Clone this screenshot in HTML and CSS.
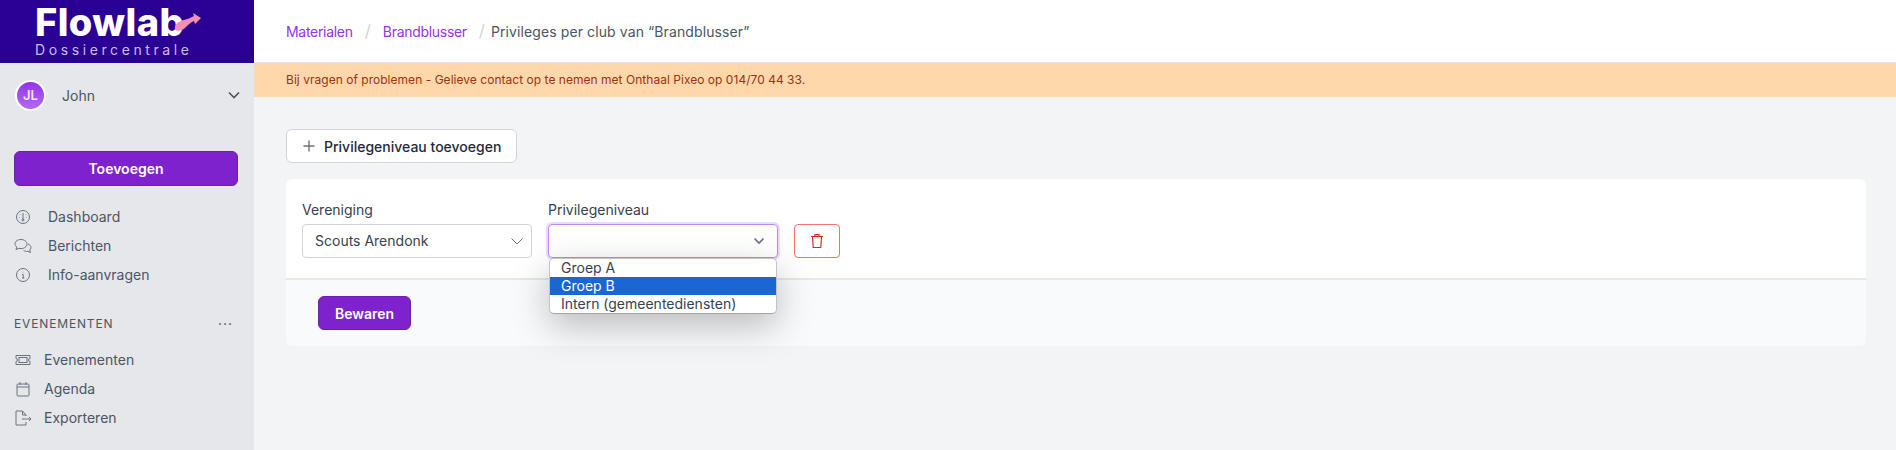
FILE: index.html
```html
<!DOCTYPE html>
<html lang="en">
<head>
    <meta charset="UTF-8">
    <title>Privileges per club</title>
    <link rel="stylesheet" href="styles.css">
</head>
<body>
    <aside class="sidebar">
        <div class="logo">
            <div class="logo-name">Flowlab</div>
            <svg class="logo-arrow" width="30" height="22" viewBox="0 0 30 22"><path d="M2 19C1 14 6 11 11 10C14 9 18 8 21 6L20 3L28 8L22 14L21 11C18 12 15 15 12 18C8 21 3 22 2 19Z" fill="#F48FB1"/></svg>
            <div class="logo-sub">Dossiercentrale</div>
        </div>
        <div class="user">
            <div class="avatar">JL</div>
            <span class="user-name">John</span>
            <svg width="14" height="14" viewBox="0 0 14 14"><path d="M2 4.500l5 5 5-5" fill="none" stroke="#4b5563" stroke-width="1.600"/></svg>
        </div>
        <button class="btn btn-add">Toevoegen</button>
        <nav class="nav">
            <a class="nav-item">
                <svg class="nav-icon" viewBox="0 0 18 16"><circle cx="9" cy="8" r="6.500"/><path d="M9 4v6M6 5.500v.5M12 5.500v.5M5 8.500h.5M12.500 8.500h.5"/><circle cx="9" cy="11" r="1"/></svg>
                Dashboard
            </a>
            <a class="nav-item">
                <svg class="nav-icon" viewBox="0 0 18 16"><path d="M7 1.500c-3.300 0-6 1.800-6 4.300 0 1.300.7 2.400 1.800 3.200L2 11.500l3-1.200c.7.200 1.300.3 2 .3 3.300 0 6-2 6-4.500S10.300 1.500 7 1.500z"/><path d="M14 6c1.800.6 3 1.900 3 3.500 0 1-.5 1.900-1.300 2.500l.8 2.500-2.700-1.200c-1.500.4-3.200 0-4.300-1"/></svg>
                Berichten
            </a>
            <a class="nav-item">
                <svg class="nav-icon" viewBox="0 0 18 16"><circle cx="9" cy="8" r="6.500"/><path d="M8 7.500h1.200v3.500M8 11h2.400M9 4.800v.6"/></svg>
                Info-aanvragen
            </a>
        </nav>
        <div class="nav-head">
            <span>EVENEMENTEN</span>
            <span class="nav-dots">···</span>
        </div>
        <nav class="nav nav-tight">
            <a class="nav-item">
                <svg class="nav-icon" viewBox="0 0 18 16"><path d="M2 3.500h14v3a1.500 1.500 0 0 0 0 3v3H2v-3a1.500 1.500 0 0 0 0-3z"/><rect x="5" y="5.500" width="8" height="5"/></svg>
                Evenementen
            </a>
            <a class="nav-item">
                <svg class="nav-icon" viewBox="0 0 18 16"><rect x="3" y="3" width="12" height="12" rx="1"/><path d="M3 6h12M6 1v3M12 1v3"/></svg>
                Agenda
            </a>
            <a class="nav-item">
                <svg class="nav-icon" viewBox="0 0 18 16"><path d="M12 6V5L8.500 1H2v14h10v-3"/><path d="M8.500 1v4H12M8 9h9M15 7l2 2-2 2"/></svg>
                Exporteren
            </a>
        </nav>
    </aside>

    <main class="main">
        <div class="crumbs">
            <a class="crumb-link">Materialen</a>
            <span class="crumb-sep">/</span>
            <a class="crumb-link">Brandblusser</a>
            <span class="crumb-sep crumb-sep-last">/</span>
            <span class="crumb-current">Privileges per club van “Brandblusser”</span>
        </div>
        <div class="notice">Bij vragen of problemen - Gelieve contact op te nemen met Onthaal Pixeo op 014/70 44 33.</div>
        <div class="content">
            <button class="btn btn-white">
                <svg width="14" height="14" viewBox="0 0 14 14"><path d="M7 1.500v11M1.500 7h11" stroke="#6b7280" stroke-width="1.400"/></svg>
                Privilegeniveau toevoegen
            </button>
            <section class="card">
                <div class="form-row">
                    <div class="field">
                        <label class="field-label">Vereniging</label>
                        <div class="select">
                            Scouts Arendonk
                            <svg class="select-chevron" width="14" height="14" viewBox="0 0 14 14"><path d="M1.500 4.500L7 10l5.500-5.500" fill="none" stroke="#6b7280" stroke-width="1"/></svg>
                        </div>
                    </div>
                    <div class="field">
                        <label class="field-label">Privilegeniveau</label>
                        <div class="select select-open">
                            <svg class="select-chevron" width="14" height="14" viewBox="0 0 14 14"><path d="M2.500 4.500L7 9l4.500-4.500" fill="none" stroke="#6b7280" stroke-width="1.600"/></svg>
                            <ul class="dropdown">
                                <li>Groep A</li>
                                <li class="selected">Groep B</li>
                                <li>Intern (gemeentediensten)</li>
                            </ul>
                        </div>
                    </div>
                    <button class="btn-delete">
                        <svg width="16" height="16" viewBox="0 0 16 16"><path d="M2 3.500h12M6 3.500V1.500h4v2M3.500 3.500l.7 11h7.600l.7-11" fill="none" stroke="#dc2626" stroke-width="1.200"/></svg>
                    </button>
                </div>
                <div class="card-footer">
                    <button class="btn btn-save">Bewaren</button>
                </div>
            </section>
        </div>
    </main>
</body>
</html>
```

FILE: styles.css
```css
* {
    box-sizing: border-box;
    margin: 0;
    padding: 0;
}
body {
    font-family: 'Inter', sans-serif;
    font-size: 14px;
    display: flex;
    height: 100vh;
    overflow: hidden;
    background-color: #F3F4F6;
    color: #374151;
}
.sidebar {
    width: 254px;
    flex-shrink: 0;
    background-color: #E5E7EB;
    color: #4B5563;
}
.logo {
    position: relative;
    height: 63px;
    padding: 4px 0 0 35px;
    background-color: #2A0094;
}
.logo-name {
    font-family: 'Inter', sans-serif;
    font-weight: 800;
    font-size: 38px;
    line-height: 36px;
    letter-spacing: 0.4px;
    color: #FFFFFF;
}
.logo-arrow {
    position: absolute;
    left: 173px;
    top: 10px;
}
.logo-sub {
    margin-top: 2px;
    font-size: 14px;
    line-height: 16px;
    letter-spacing: 3.6px;
    color: #C9BEEB;
}
.user {
    display: flex;
    align-items: center;
    height: 64px;
    padding: 0 13px 0 15px;
}
.avatar {
    width: 31px;
    height: 31px;
    border-radius: 50%;
    border: 2px solid #FFFFFF;
    background: linear-gradient(#9333EA, #B46AF0);
    color: #F3E8FF;
    font-size: 13px;
    font-weight: 600;
    line-height: 27px;
    text-align: center;
}
.user-name {
    margin-left: 16px;
    flex: 1;
}
.btn {
    font-family: 'Inter', sans-serif;
    font-size: 14px;
    font-weight: 500;
    border-radius: 6px;
    cursor: pointer;
}
.btn-add {
    display: block;
    width: 224px;
    height: 35px;
    margin: 24px 0 0 14px;
    background-color: #7E22CE;
    border: 1px solid #6B21A8;
    color: #FFFFFF;
    font-weight: 600;
}
.nav {
    margin-top: 16px;
}
.nav-item {
    display: flex;
    align-items: center;
    height: 29px;
    padding-left: 14px;
    gap: 16px;
}
.nav-icon {
    width: 18px;
    height: 16px;
    flex-shrink: 0;
    fill: none;
    stroke: #6B7280;
    stroke-width: 1;
}
.nav-tight .nav-item {
    gap: 12px;
}
.nav-tight {
    margin-top: 12px;
}
.nav-head {
    display: flex;
    justify-content: space-between;
    margin-top: 26px;
    padding: 0 21px 0 14px;
    font-size: 12px;
    font-weight: 400;
    line-height: 18px;
    letter-spacing: 0.85px;
}
.nav-dots {
    font-size: 14px;
    font-weight: 400;
    letter-spacing: 1px;
}
.main {
    flex: 1;
    min-width: 0;
}
.crumbs {
    display: flex;
    align-items: center;
    height: 63px;
    padding-left: 32px;
    background-color: #FFFFFF;
    border-bottom: 1px solid #E5E7EB;
    color: #4B5563;
}
.crumb-link {
    color: #9333EA;
    letter-spacing: -0.3px;
}
.crumb-current {
    letter-spacing: 0.1px;
}
.crumb-sep {
    margin: 0 12px;
    color: #D1D5DB;
    font-size: 17px;
}
.crumb-sep-last {
    margin: 0 6px 0 12px;
}
.notice {
    height: 34px;
    padding-left: 32px;
    background-color: #FED7AA;
    color: #9A3412;
    font-size: 12px;
    line-height: 34px;
    letter-spacing: 0.03px;
}
.content {
    padding: 32px 30px 0 32px;
}
.btn-white {
    display: flex;
    align-items: center;
    gap: 8px;
    height: 34px;
    padding: 0 15px;
    background-color: #FFFFFF;
    border: 1px solid #D1D5DB;
    color: #1F2937;
}
.card {
    margin-top: 16px;
    border-radius: 6px;
    background-color: #FFFFFF;
}
.form-row {
    display: flex;
    align-items: flex-end;
    gap: 16px;
    height: 101px;
    padding: 0 16px 20px;
    border-bottom: 2px solid #E5E7EB;
}
.field-label {
    display: block;
    line-height: 20px;
    margin-bottom: 4px;
}
.select {
    position: relative;
    width: 230px;
    height: 34px;
    padding-left: 12px;
    border: 1px solid #D1D5DB;
    border-radius: 4px;
    line-height: 32px;
    color: #374151;
}
.select-chevron {
    position: absolute;
    right: 7px;
    top: 9px;
}
.select-open {
    border-color: #C084FC;
    box-shadow: 0 0 0 2px #EBDCFF;
}
.select-open .select-chevron {
    right: 11px;
}
.dropdown {
    position: absolute;
    left: 0;
    top: 33px;
    width: 228px;
    overflow: hidden;
    list-style: none;
    background-color: #FFFFFF;
    border-radius: 5px;
    border: 1px solid #C4C4C4;
    border-bottom-color: #A3A3A3;
    box-shadow: 0 12px 36px rgba(0, 0, 0, 0.25);
    z-index: 2;
}
.dropdown li {
    height: 18px;
    padding-left: 11px;
    line-height: 17px;
}
.dropdown .selected {
    background-color: #1967D2;
    color: #FFFFFF;
}
.btn-delete {
    display: flex;
    align-items: center;
    justify-content: center;
    width: 46px;
    height: 34px;
    background-color: #FFFFFF;
    border: 1px solid #F87171;
    border-radius: 4px;
}
.card-footer {
    height: 66px;
    padding: 16px 32px;
    background-color: #F9FAFB;
    border-radius: 0 0 6px 6px;
}
.btn-save {
    width: 93px;
    height: 34px;
    background-color: #7E22CE;
    border: 1px solid #6B21A8;
    color: #FFFFFF;
    font-weight: 600;
}
```
